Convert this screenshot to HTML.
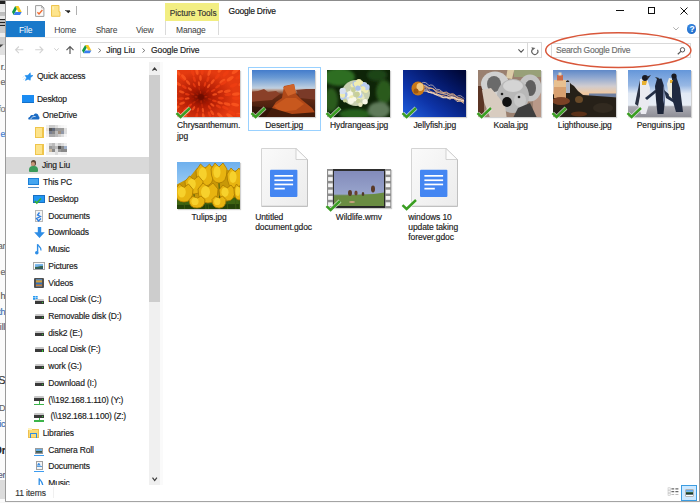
<!DOCTYPE html>
<html><head><meta charset="utf-8">
<style>
*{margin:0;padding:0;box-sizing:border-box}
html,body{width:700px;height:503px;overflow:hidden;background:#fff}
body{position:relative;font-family:"Liberation Sans",sans-serif;color:#1a1a1a}
.a{position:absolute}
.t{position:absolute;white-space:pre;font-size:8.5px;letter-spacing:-0.1px;line-height:12px;-webkit-text-stroke:0.15px currentColor}
svg{position:absolute;overflow:visible}
</style></head><body>
<div class="a" style="left:0;top:0;width:5px;height:503px;overflow:hidden;background:#fbfbfb"><div class="a" style="left:0;top:0;width:5px;height:60px;background:linear-gradient(180deg,#ddd 0,#222 1px,#222 4.5px,#e6e6e6 4.5px,#eee 12px,#bbb 12px,#c4c4c4 16px,#e8e8e8 16px,#e8e8e8 19px,#222 19px,#222 20.5px,#bbb 20.5px,#bbb 22px,#222 22px,#222 23.5px,#bbb 23.5px,#bbb 25px,#222 25px,#222 26.5px,#c8c8c8 26.5px,#ccc 33px,#eee 33px,#eee 37px,#ccc 37px,#ccc 45px,#e0e0e0 45px,#e0e0e0 55px,#fbfbfb 55px)"></div><svg style="left:0;top:44px" width="4" height="4"><path d="M0 0.5L3.5 0.5L0 3.5Z" fill="#444"/></svg><div class="a" style="left:0;top:480px;width:5px;height:19px;background:#dcdcdc"></div><div class="t" style="right:-0.5px;left:auto;top:61px;color:#555;font-size:9px;">r.</div><div class="t" style="right:-0.5px;left:auto;top:76px;color:#666;font-size:9px;">e</div><div class="t" style="right:-0.5px;left:auto;top:103px;color:#777;font-size:9px;">fo</div><div class="t" style="right:-0.5px;left:auto;top:128px;color:#3a7ad0;font-size:9px;">e</div><div class="t" style="right:-0.5px;left:auto;top:240px;color:#666;font-size:9px;">ar</div><div class="t" style="right:-0.5px;left:auto;top:265.5px;color:#666;font-size:9px;">e</div><div class="t" style="right:-0.5px;left:auto;top:290px;color:#555;font-size:9px;">h</div><div class="t" style="right:-0.5px;left:auto;top:306px;color:#3a6ab0;font-size:9px;">th</div><div class="t" style="right:-0.5px;left:auto;top:321.4px;color:#556;font-size:9px;">ill</div><div class="t" style="right:-0.5px;left:auto;top:373.6px;color:#333;font-size:9px;font-size:11px">S</div><div class="t" style="right:-0.5px;left:auto;top:401.6px;color:#666;font-size:9px;">D</div><div class="t" style="right:-0.5px;left:auto;top:418px;color:#3a6ab0;font-size:9px;">ic</div><div class="t" style="right:-0.5px;left:auto;top:444.5px;color:#222;font-size:9px;font-weight:bold;font-size:10px">Or</div><div class="t" style="right:-0.5px;left:auto;top:469px;color:#557;font-size:9px;">er</div></div>
<div class="a" style="left:0;top:502px;width:700px;height:1px;background:#f6f6f6"></div>
<div class="a" style="left:5px;top:0;width:695px;height:1px;background:#8c8c8c"></div>
<div class="a" style="left:5px;top:0;width:1px;height:502px;background:#9a9a9a"></div>
<div class="a" style="left:699px;top:0;width:1px;height:502px;background:#9a9a9a"></div>
<div class="a" style="left:5px;top:501px;width:695px;height:1px;background:#a4a4a4"></div>
<div class="a" style="left:165px;top:3px;width:54px;height:18px;background:#f2ee82"></div>
<div class="t" style="left:169.8px;top:6.55px;color:#333;font-size:8.3px;letter-spacing:-0.05px">Picture Tools</div>

<div class="t" style="left:228.5px;top:5.15px;color:#111;letter-spacing:-0.2px">Google Drive</div>

<div class="a" style="left:616px;top:10px;width:8px;height:1px;background:#111"></div>
<div class="a" style="left:648px;top:7px;width:7px;height:7px;border:1px solid #111"></div>
<svg style="left:680px;top:7px" width="8" height="8"><path d="M0.5 0.5L7.5 7.5M7.5 0.5L0.5 7.5" stroke="#111" stroke-width="1"/></svg>
<div class="a" style="left:6px;top:21px;width:39px;height:16px;background:#1979ca"></div>
<div class="t" style="left:19px;top:23.95px;color:#fff;-webkit-text-stroke:0">File</div>

<div class="t" style="left:54.3px;top:23.95px;color:#3c3c3c;letter-spacing:-0.25px;-webkit-text-stroke:0">Home</div>

<div class="t" style="left:95.7px;top:23.95px;color:#3c3c3c;letter-spacing:-0.25px;-webkit-text-stroke:0">Share</div>

<div class="t" style="left:136px;top:23.95px;color:#3c3c3c;letter-spacing:-0.25px;-webkit-text-stroke:0">View</div>

<div class="a" style="left:165px;top:21px;width:1px;height:14px;background:#dadada"></div>
<div class="a" style="left:218px;top:21px;width:1px;height:14px;background:#dadada"></div>
<div class="t" style="left:176px;top:23.95px;color:#3c3c3c;letter-spacing:-0.2px;-webkit-text-stroke:0">Manage</div>

<div class="a" style="left:6px;top:37px;width:693px;height:1px;background:#ececec"></div>
<div class="a" style="left:80px;top:42px;width:462px;height:16px;border:1px solid #d9d9d9"></div>
<div class="a" style="left:527px;top:42px;width:1px;height:16px;background:#d9d9d9"></div>
<div class="a" style="left:551px;top:42.5px;width:140px;height:15px;border:1px solid #d9d9d9"></div>
<div class="t" style="left:106.3px;top:43.65px;color:#1a1a1a;">Jing Liu</div>

<div class="t" style="left:151px;top:43.65px;color:#1a1a1a;">Google Drive</div>

<div class="t" style="left:556px;top:43.95px;color:#6d6d6d;letter-spacing:-0.25px">Search Google Drive</div>

<div class="a" style="left:149px;top:62px;width:11px;height:422.5px;background:#f0f0f0"></div>
<div class="a" style="left:160px;top:62px;width:3px;height:422.5px;background:#fafafa"></div>
<svg style="left:151.8px;top:66.8px" width="5.2" height="4.2"><path d="M0.5 3.6L2.6 1L4.7 3.6" stroke="#3a3a3a" stroke-width="1.2" fill="none"/></svg>
<svg style="left:151.8px;top:476.8px" width="5.4" height="4.4"><path d="M0.5 0.6L2.7 3.5L4.9 0.6" stroke="#3a3a3a" stroke-width="1.2" fill="none"/></svg>
<div class="a" style="left:149px;top:75px;width:11px;height:227px;background:#cdcdcd"></div>
<div class="a" style="left:6px;top:157px;width:143px;height:17px;background:#d9d9d9"></div>
<div class="a" style="left:0;top:0;width:149px;height:484.7px;overflow:hidden"><div class="t" style="left:36.9px;top:70.25px;color:#1a1a1a;letter-spacing:-0.17px">Quick access</div>
<div class="t" style="left:36.9px;top:92.59px;color:#1a1a1a;letter-spacing:-0.17px">Desktop</div>
<div class="t" style="left:42.6px;top:109.31px;color:#1a1a1a;letter-spacing:-0.17px">OneDrive</div>
<div class="t" style="left:42px;top:159.47px;color:#1a1a1a;letter-spacing:-0.17px">Jing Liu</div>
<div class="t" style="left:42.9px;top:176.19px;color:#1a1a1a;letter-spacing:-0.17px">This PC</div>
<div class="t" style="left:48.3px;top:192.91px;color:#1a1a1a;letter-spacing:-0.17px">Desktop</div>
<div class="t" style="left:48.3px;top:209.63px;color:#1a1a1a;letter-spacing:-0.17px">Documents</div>
<div class="t" style="left:48.3px;top:226.35px;color:#1a1a1a;letter-spacing:-0.17px">Downloads</div>
<div class="t" style="left:48.3px;top:243.07px;color:#1a1a1a;letter-spacing:-0.17px">Music</div>
<div class="t" style="left:48.3px;top:259.79px;color:#1a1a1a;letter-spacing:-0.17px">Pictures</div>
<div class="t" style="left:48.3px;top:276.51px;color:#1a1a1a;letter-spacing:-0.17px">Videos</div>
<div class="t" style="left:48.3px;top:293.23px;color:#1a1a1a;letter-spacing:-0.17px">Local Disk (C:)</div>
<div class="t" style="left:48.3px;top:309.95px;color:#1a1a1a;letter-spacing:-0.2px">Removable disk (D:)</div>
<div class="t" style="left:48.3px;top:326.67px;color:#1a1a1a;letter-spacing:-0.17px">disk2 (E:)</div>
<div class="t" style="left:48.3px;top:343.39px;color:#1a1a1a;letter-spacing:-0.17px">Local Disk (F:)</div>
<div class="t" style="left:48.3px;top:360.11px;color:#1a1a1a;letter-spacing:-0.17px">work (G:)</div>
<div class="t" style="left:48.3px;top:376.83px;color:#1a1a1a;letter-spacing:-0.17px">Download (I:)</div>
<div class="t" style="left:48.3px;top:393.55px;color:#1a1a1a;letter-spacing:-0.22px">(\\192.168.1.110) (Y:)</div>
<div class="t" style="left:50.5px;top:410.27px;color:#1a1a1a;letter-spacing:-0.22px">(\\192.168.1.100) (Z:)</div>
<div class="t" style="left:42.8px;top:426.99px;color:#1a1a1a;letter-spacing:-0.17px">Libraries</div>
<div class="t" style="left:48.3px;top:443.71px;color:#1a1a1a;letter-spacing:-0.17px">Camera Roll</div>
<div class="t" style="left:48.3px;top:460.43px;color:#1a1a1a;letter-spacing:-0.17px">Documents</div>
<div class="t" style="left:48.3px;top:477.15px;color:#1a1a1a;letter-spacing:-0.17px">Music</div>
<svg style="left:20px;top:70px" width="15" height="12" viewBox="0 0 15 12"><path d="M10.20 2.80L10.46 5.35L13.00 5.50L10.46 7.64L10.20 10.20L8.10 9.16L5.40 10.40L6.52 7.70L5.10 5.50L8.01 5.35Z" fill="#2590ee" stroke="#2590ee" stroke-width="0.6" stroke-linejoin="round"/><path d="M3 10L5 8M2.5 7.5L4.5 6" stroke="#cfe6fa" stroke-width="0.8"/></svg><div class="a" style="left:22px;top:95px;width:11.5px;height:8px;background:#1b8cf2;border-bottom:1px solid #1470c8"></div><svg style="left:27.5px;top:111.5px" width="12" height="8" viewBox="0 0 12 8"><path d="M0.6 7.4C-0.2 6.6 0.4 5 1.8 5C2.3 3.2 4.2 2.6 5.3 3.4C6.4 0.4 10.6 0.8 10.6 4.3C11.8 4.6 11.8 7.4 10.6 7.4Z" fill="#1c6cc4"/><path d="M2.6 7.2C3.5 5.2 5.5 4 7.6 4.6" stroke="#fff" stroke-width="0.7" fill="none"/></svg><div class="a" style="left:35px;top:127px;width:8.5px;height:11px;background:#fde38a;border:1px solid #efc54c;border-right-width:2px"></div><div class="a" style="left:35px;top:143.5px;width:8.5px;height:11px;background:#fde38a;border:1px solid #efc54c;border-right-width:2px"></div><svg style="left:46.2px;top:125px;filter:blur(0.5px)" width="21" height="12"><rect x="0" y="0" width="3" height="3" fill="#eee"/><rect x="3" y="0" width="3" height="3" fill="#ccc"/><rect x="6" y="0" width="3" height="3" fill="#ccc"/><rect x="9" y="0" width="3" height="3" fill="#ddd"/><rect x="12" y="0" width="3" height="3" fill="#f0f0f0"/><rect x="15" y="0" width="3" height="3" fill="#f5f5f5"/><rect x="18" y="0" width="3" height="3" fill="#fafafa"/><rect x="0" y="3" width="3" height="3" fill="#e8e0d8"/><rect x="3" y="3" width="3" height="3" fill="#555"/><rect x="6" y="3" width="3" height="3" fill="#606878"/><rect x="9" y="3" width="3" height="3" fill="#999"/><rect x="12" y="3" width="3" height="3" fill="#999"/><rect x="15" y="3" width="3" height="3" fill="#9a9a9a"/><rect x="18" y="3" width="3" height="3" fill="#ddd"/><rect x="0" y="6" width="3" height="3" fill="#eee"/><rect x="3" y="6" width="3" height="3" fill="#7a8090"/><rect x="6" y="6" width="3" height="3" fill="#888"/><rect x="9" y="6" width="3" height="3" fill="#bbb"/><rect x="12" y="6" width="3" height="3" fill="#a09080"/><rect x="15" y="6" width="3" height="3" fill="#9098a8"/><rect x="18" y="6" width="3" height="3" fill="#ddd"/><rect x="0" y="9" width="3" height="3" fill="#f5f0f0"/><rect x="3" y="9" width="3" height="3" fill="#aaa"/><rect x="6" y="9" width="3" height="3" fill="#aaa"/><rect x="9" y="9" width="3" height="3" fill="#bbb"/><rect x="12" y="9" width="3" height="3" fill="#ccc"/><rect x="15" y="9" width="3" height="3" fill="#ddd"/><rect x="18" y="9" width="3" height="3" fill="#f5f5f5"/></svg><svg style="left:46.2px;top:143.3px;filter:blur(0.5px)" width="21" height="12"><rect x="0" y="0" width="3" height="3" fill="#f5f5f5"/><rect x="3" y="0" width="3" height="3" fill="#ccc"/><rect x="6" y="0" width="3" height="3" fill="#bbb"/><rect x="9" y="0" width="3" height="3" fill="#e5e5e5"/><rect x="12" y="0" width="3" height="3" fill="#ccc"/><rect x="15" y="0" width="3" height="3" fill="#ddd"/><rect x="18" y="0" width="3" height="3" fill="#eee"/><rect x="0" y="3" width="3" height="3" fill="#f5f5f5"/><rect x="3" y="3" width="3" height="3" fill="#999"/><rect x="6" y="3" width="3" height="3" fill="#aaa"/><rect x="9" y="3" width="3" height="3" fill="#bbb"/><rect x="12" y="3" width="3" height="3" fill="#555"/><rect x="15" y="3" width="3" height="3" fill="#888"/><rect x="18" y="3" width="3" height="3" fill="#a0b0c8"/><rect x="0" y="6" width="3" height="3" fill="#f5f5f5"/><rect x="3" y="6" width="3" height="3" fill="#c8b8a0"/><rect x="6" y="6" width="3" height="3" fill="#888"/><rect x="9" y="6" width="3" height="3" fill="#ddd"/><rect x="12" y="6" width="3" height="3" fill="#999"/><rect x="15" y="6" width="3" height="3" fill="#888"/><rect x="18" y="6" width="3" height="3" fill="#888"/><rect x="0" y="9" width="3" height="3" fill="#f0f0f0"/><rect x="3" y="9" width="3" height="3" fill="#eee"/><rect x="6" y="9" width="3" height="3" fill="#eee"/><rect x="9" y="9" width="3" height="3" fill="#ddd"/><rect x="12" y="9" width="3" height="3" fill="#f0f0f0"/><rect x="15" y="9" width="3" height="3" fill="#eee"/><rect x="18" y="9" width="3" height="3" fill="#eee"/></svg><div class="a" style="left:29px;top:165.5px;width:8.5px;height:6px;background:#3a9a5a;border-radius:4px 4px 1px 1px"></div><div class="a" style="left:30.5px;top:159.8px;width:5.5px;height:6.3px;background:#5a4535;border-radius:3px"></div><div class="a" style="left:31.3px;top:161.8px;width:4px;height:4px;background:#c8977a;border-radius:2px"></div><div class="a" style="left:28px;top:177.5px;width:11px;height:7.5px;background:#46a6f0;border:1px solid #1a7fd8"></div><div class="a" style="left:28px;top:186.5px;width:11px;height:1px;background:#5a8fc8"></div><div class="a" style="left:33.3px;top:195px;width:11.5px;height:8px;background:#2196f3;border:1px solid #1a6fc0"></div><svg style="left:34px;top:197px" width="8" height="7"><path d="M0.8 4L2.8 6L7 1.5" stroke="#38b030" stroke-width="1.6" fill="none"/></svg><div class="a" style="left:34.5px;top:210px;width:8.5px;height:11.5px;background:#f4f4f4;border:1px solid #b8b8b8"></div><svg style="left:35px;top:211.5px" width="8" height="10"><path d="M4.5 0.5L2.5 3L5.5 4.5L1.5 6.5L4 9.5M6 6.5L3.5 9" stroke="#2a7de1" stroke-width="1.3" fill="none"/></svg><svg style="left:33.5px;top:227px" width="11" height="11" viewBox="0 0 11 11"><path d="M3.8 0H7.2V5.2H10.8L5.5 11L0.2 5.2H3.8Z" fill="#2d8de6"/></svg><svg style="left:34.5px;top:243.8px" width="7" height="11" viewBox="0 0 7 11"><path d="M2.6 0.2V7.8" stroke="#2d8de6" stroke-width="1.4"/><path d="M2.6 0.5C3.5 2.5 6.5 3 6 6.5" stroke="#2d8de6" stroke-width="1.2" fill="none"/><ellipse cx="1.8" cy="8.8" rx="1.8" ry="1.8" fill="#2d8de6"/></svg><div class="a" style="left:33px;top:262px;width:11.7px;height:8px;background:#fafafa;border:1px solid #a8a8a8"></div><div class="a" style="left:34.5px;top:263.5px;width:8.7px;height:5px;background:linear-gradient(170deg,#8ec8f5 0%,#6aa8e0 45%,#3d6a48 55%,#2a5070 100%)"></div><div class="a" style="left:34.2px;top:277.7px;width:9.7px;height:10.6px;background:#505050;border-radius:1px"></div><div class="a" style="left:35.7px;top:278.7px;width:6.7px;height:8.6px;background:linear-gradient(180deg,#3a80d0 0%,#e0a030 30%,#2a70c0 55%,#d08030 80%,#3a70b0 100%)"></div><svg style="left:33px;top:295.8px" width="5" height="4"><rect x="0" y="0" width="2" height="1.6" fill="#2a9af0"/><rect x="2.4" y="0" width="2.3" height="1.6" fill="#2a9af0"/><rect x="0" y="2" width="2" height="1.8" fill="#2a9af0"/><rect x="2.4" y="2" width="2.3" height="1.8" fill="#2a9af0"/></svg><div class="a" style="left:34.5px;top:298.5px;width:9.5px;height:2px;background:#c8c8c8;border-radius:1px 1px 0 0"></div><div class="a" style="left:34.5px;top:300.5px;width:9.5px;height:3px;background:#3a3a3a"></div><div class="a" style="left:42.0px;top:301.5px;width:1.2px;height:1.2px;background:#3c3"></div><div class="a" style="left:34.5px;top:313.8px;width:9.5px;height:2px;background:#c8c8c8;border-radius:1px 1px 0 0"></div><div class="a" style="left:34.5px;top:315.8px;width:9.5px;height:3px;background:#3a3a3a"></div><div class="a" style="left:42.0px;top:316.8px;width:1.2px;height:1.2px;background:#3c3"></div><div class="a" style="left:34.5px;top:330.6px;width:9.5px;height:2px;background:#c8c8c8;border-radius:1px 1px 0 0"></div><div class="a" style="left:34.5px;top:332.6px;width:9.5px;height:3px;background:#3a3a3a"></div><div class="a" style="left:42.0px;top:333.6px;width:1.2px;height:1.2px;background:#3c3"></div><div class="a" style="left:34.5px;top:347.40000000000003px;width:9.5px;height:2px;background:#c8c8c8;border-radius:1px 1px 0 0"></div><div class="a" style="left:34.5px;top:349.40000000000003px;width:9.5px;height:3px;background:#3a3a3a"></div><div class="a" style="left:42.0px;top:350.40000000000003px;width:1.2px;height:1.2px;background:#3c3"></div><div class="a" style="left:34.5px;top:364.1px;width:9.5px;height:2px;background:#c8c8c8;border-radius:1px 1px 0 0"></div><div class="a" style="left:34.5px;top:366.1px;width:9.5px;height:3px;background:#3a3a3a"></div><div class="a" style="left:42.0px;top:367.1px;width:1.2px;height:1.2px;background:#3c3"></div><div class="a" style="left:34.5px;top:380.90000000000003px;width:9.5px;height:2px;background:#c8c8c8;border-radius:1px 1px 0 0"></div><div class="a" style="left:34.5px;top:382.90000000000003px;width:9.5px;height:3px;background:#3a3a3a"></div><div class="a" style="left:42.0px;top:383.90000000000003px;width:1.2px;height:1.2px;background:#3c3"></div><div class="a" style="left:34.4px;top:396.2px;width:9.5px;height:2px;background:#c8c8c8;border-radius:1px 1px 0 0"></div><div class="a" style="left:34.4px;top:398.2px;width:9.5px;height:3px;background:#3a3a3a"></div><div class="a" style="left:41.9px;top:399.2px;width:1.2px;height:1.2px;background:#3c3"></div><div class="a" style="left:38.5px;top:401.2px;width:1.3px;height:2.5px;background:#3cb44a"></div><div class="a" style="left:34.4px;top:403.5px;width:9.5px;height:1.3px;background:#3cb44a"></div><div class="a" style="left:34.4px;top:413.0px;width:9.5px;height:2px;background:#c8c8c8;border-radius:1px 1px 0 0"></div><div class="a" style="left:34.4px;top:415.0px;width:9.5px;height:3px;background:#3a3a3a"></div><div class="a" style="left:41.9px;top:416.0px;width:1.2px;height:1.2px;background:#3c3"></div><div class="a" style="left:38.5px;top:418.0px;width:1.3px;height:2.5px;background:#3cb44a"></div><div class="a" style="left:34.4px;top:420.3px;width:9.5px;height:1.3px;background:#3cb44a"></div><div class="a" style="left:27.8px;top:428.6px;width:11px;height:9px;background:#fbdc78;border:1px solid #eec050"></div><div class="a" style="left:27.8px;top:428px;width:4px;height:1.5px;background:#fff3c0"></div><div class="a" style="left:30.2px;top:432.8px;width:6.7px;height:5.2px;border:1.6px solid #2d8de6;border-bottom:none;border-radius:1px 1px 0 0"></div><div class="a" style="left:34.8px;top:448px;width:8.2px;height:6px;background:#f4f4f4;border:1px solid #9a9a9a"></div><div class="a" style="left:35.8px;top:449.3px;width:6.2px;height:3.5px;background:linear-gradient(180deg,#6ab0e8 0 40%,#3a5a40 60%,#5a7090)"></div><div class="a" style="left:33.8px;top:454.5px;width:10.1px;height:1.2px;background:#3d9cf0"></div><div class="a" style="left:35.5px;top:460.9px;width:7px;height:9.5px;background:#f4f4f4;border:1px solid #a0a0a0"></div><div class="a" style="left:36.8px;top:462.5px;width:4px;height:3px;background:#3d8de0;clip-path:polygon(50% 0,100% 100%,0 100%)"></div><div class="a" style="left:36.5px;top:466px;width:5px;height:1px;background:#5aa0e0"></div><div class="a" style="left:33.8px;top:471.2px;width:10.1px;height:1.2px;background:#3d9cf0"></div><svg style="left:38.4px;top:477.8px" width="6" height="8"><path d="M1.2 0.3V7.5M1.2 0.8C2.5 2.5 4.5 3.5 4.8 7.5" stroke="#2d8de6" stroke-width="1.3" fill="none"/></svg></div>
<div class="a" style="left:177px;top:69.5px;width:63px;height:47px;overflow:hidden;box-shadow:1px 1px 1px rgba(0,0,0,0.18)"><svg style="left:-3px;top:-3px;filter:blur(0.55px)" width="69" height="53" viewBox="-3 -3 69 53"><rect x="-3" y="-3" width="69" height="53" fill="#d83010"/>
<radialGradient id="g1" cx="0.38" cy="0.57" r="0.5"><stop offset="0" stop-color="#6a0c00"/><stop offset="0.35" stop-color="#b01c04"/><stop offset="1" stop-color="#e43a10"/></radialGradient>
<rect x="-3" y="-3" width="69" height="53" fill="url(#g1)"/>
<g opacity="0.75"><ellipse cx="29.0" cy="26.8" rx="1.5" ry="0.7" transform="rotate(-3 29.0 26.8)" fill="#c82a08"/><ellipse cx="27.5" cy="30.4" rx="1.5" ry="0.7" transform="rotate(46 27.5 30.4)" fill="#a81800"/><ellipse cx="24.1" cy="31.7" rx="1.5" ry="0.7" transform="rotate(89 24.1 31.7)" fill="#c82a08"/><ellipse cx="20.4" cy="30.3" rx="1.5" ry="0.7" transform="rotate(136 20.4 30.3)" fill="#a81800"/><ellipse cx="19.0" cy="26.9" rx="1.5" ry="0.7" transform="rotate(181 19.0 26.9)" fill="#c82a08"/><ellipse cx="20.2" cy="23.9" rx="1.5" ry="0.7" transform="rotate(220 20.2 23.9)" fill="#a81800"/><ellipse cx="23.5" cy="22.3" rx="1.5" ry="0.7" transform="rotate(264 23.5 22.3)" fill="#c82a08"/><ellipse cx="27.8" cy="23.9" rx="1.5" ry="0.7" transform="rotate(319 27.8 23.9)" fill="#a81800"/><ellipse cx="32.7" cy="29.1" rx="2.0" ry="0.9" transform="rotate(14 32.7 29.1)" fill="#c82a08"/><ellipse cx="30.5" cy="33.0" rx="2.0" ry="0.9" transform="rotate(44 30.5 33.0)" fill="#a81800"/><ellipse cx="25.1" cy="35.5" rx="2.0" ry="0.9" transform="rotate(83 25.1 35.5)" fill="#c82a08"/><ellipse cx="21.4" cy="35.2" rx="2.0" ry="0.9" transform="rotate(107 21.4 35.2)" fill="#a81800"/><ellipse cx="17.0" cy="32.4" rx="2.0" ry="0.9" transform="rotate(141 17.0 32.4)" fill="#c82a08"/><ellipse cx="15.2" cy="28.9" rx="2.0" ry="0.9" transform="rotate(167 15.2 28.9)" fill="#a81800"/><ellipse cx="15.5" cy="24.2" rx="2.0" ry="0.9" transform="rotate(199 15.5 24.2)" fill="#c82a08"/><ellipse cx="17.4" cy="21.1" rx="2.0" ry="0.9" transform="rotate(223 17.4 21.1)" fill="#a81800"/><ellipse cx="22.2" cy="18.6" rx="2.0" ry="0.9" transform="rotate(259 22.2 18.6)" fill="#c82a08"/><ellipse cx="27.3" cy="19.0" rx="2.0" ry="0.9" transform="rotate(291 27.3 19.0)" fill="#a81800"/><ellipse cx="30.6" cy="21.2" rx="2.0" ry="0.9" transform="rotate(317 30.6 21.2)" fill="#c82a08"/><ellipse cx="32.9" cy="25.5" rx="2.0" ry="0.9" transform="rotate(350 32.9 25.5)" fill="#a81800"/><ellipse cx="35.3" cy="34.9" rx="2.5" ry="1.1" transform="rotate(36 35.3 34.9)" fill="#ff5a22"/><ellipse cx="32.6" cy="37.5" rx="2.5" ry="1.1" transform="rotate(52 32.6 37.5)" fill="#f03e12"/><ellipse cx="25.9" cy="40.2" rx="2.5" ry="1.1" transform="rotate(82 25.9 40.2)" fill="#ff5a22"/><ellipse cx="20.9" cy="40.0" rx="2.5" ry="1.1" transform="rotate(103 20.9 40.0)" fill="#f03e12"/><ellipse cx="16.6" cy="38.3" rx="2.5" ry="1.1" transform="rotate(122 16.6 38.3)" fill="#ff5a22"/><ellipse cx="13.0" cy="35.3" rx="2.5" ry="1.1" transform="rotate(142 13.0 35.3)" fill="#f03e12"/><ellipse cx="10.1" cy="28.5" rx="2.5" ry="1.1" transform="rotate(174 10.1 28.5)" fill="#ff5a22"/><ellipse cx="10.3" cy="24.3" rx="2.5" ry="1.1" transform="rotate(192 10.3 24.3)" fill="#f03e12"/><ellipse cx="12.8" cy="19.0" rx="2.5" ry="1.1" transform="rotate(217 12.8 19.0)" fill="#ff5a22"/><ellipse cx="17.3" cy="15.3" rx="2.5" ry="1.1" transform="rotate(241 17.3 15.3)" fill="#f03e12"/><ellipse cx="22.0" cy="13.8" rx="2.5" ry="1.1" transform="rotate(262 22.0 13.8)" fill="#ff5a22"/><ellipse cx="28.0" cy="14.3" rx="2.5" ry="1.1" transform="rotate(287 28.0 14.3)" fill="#f03e12"/><ellipse cx="31.7" cy="15.9" rx="2.5" ry="1.1" transform="rotate(303 31.7 15.9)" fill="#ff5a22"/><ellipse cx="36.2" cy="20.4" rx="2.5" ry="1.1" transform="rotate(330 36.2 20.4)" fill="#f03e12"/><ellipse cx="37.7" cy="24.4" rx="2.5" ry="1.1" transform="rotate(349 37.7 24.4)" fill="#ff5a22"/><ellipse cx="37.4" cy="30.9" rx="2.5" ry="1.1" transform="rotate(377 37.4 30.9)" fill="#f03e12"/><ellipse cx="35.2" cy="42.7" rx="3.0" ry="1.3" transform="rotate(56 35.2 42.7)" fill="#ff5a22"/><ellipse cx="32.5" cy="44.2" rx="3.0" ry="1.3" transform="rotate(65 32.5 44.2)" fill="#f03e12"/><ellipse cx="26.3" cy="45.9" rx="3.0" ry="1.3" transform="rotate(83 26.3 45.9)" fill="#ff5a22"/><ellipse cx="19.7" cy="45.6" rx="3.0" ry="1.3" transform="rotate(102 19.7 45.6)" fill="#f03e12"/><ellipse cx="11.4" cy="41.8" rx="3.0" ry="1.3" transform="rotate(129 11.4 41.8)" fill="#ff5a22"/><ellipse cx="8.5" cy="39.0" rx="3.0" ry="1.3" transform="rotate(141 8.5 39.0)" fill="#f03e12"/><ellipse cx="5.1" cy="33.2" rx="3.0" ry="1.3" transform="rotate(161 5.1 33.2)" fill="#ff5a22"/><ellipse cx="4.1" cy="28.6" rx="3.0" ry="1.3" transform="rotate(175 4.1 28.6)" fill="#f03e12"/><ellipse cx="4.7" cy="21.9" rx="3.0" ry="1.3" transform="rotate(196 4.7 21.9)" fill="#ff5a22"/><ellipse cx="7.1" cy="16.9" rx="3.0" ry="1.3" transform="rotate(212 7.1 16.9)" fill="#f03e12"/><ellipse cx="11.1" cy="12.5" rx="3.0" ry="1.3" transform="rotate(230 11.1 12.5)" fill="#ff5a22"/><ellipse cx="17.3" cy="9.1" rx="3.0" ry="1.3" transform="rotate(251 17.3 9.1)" fill="#f03e12"/><ellipse cx="23.5" cy="8.0" rx="3.0" ry="1.3" transform="rotate(269 23.5 8.0)" fill="#ff5a22"/><ellipse cx="30.9" cy="9.2" rx="3.0" ry="1.3" transform="rotate(290 30.9 9.2)" fill="#f03e12"/><ellipse cx="35.7" cy="11.6" rx="3.0" ry="1.3" transform="rotate(306 35.7 11.6)" fill="#ff5a22"/><ellipse cx="40.7" cy="16.5" rx="3.0" ry="1.3" transform="rotate(326 40.7 16.5)" fill="#f03e12"/><ellipse cx="43.2" cy="21.7" rx="3.0" ry="1.3" transform="rotate(344 43.2 21.7)" fill="#ff5a22"/><ellipse cx="44.0" cy="28.1" rx="3.0" ry="1.3" transform="rotate(363 44.0 28.1)" fill="#f03e12"/><ellipse cx="43.1" cy="32.7" rx="3.0" ry="1.3" transform="rotate(378 43.1 32.7)" fill="#ff5a22"/><ellipse cx="41.4" cy="36.4" rx="3.0" ry="1.3" transform="rotate(390 41.4 36.4)" fill="#f03e12"/><ellipse cx="31.9" cy="51.5" rx="3.5" ry="1.5" transform="rotate(73 31.9 51.5)" fill="#ff5a22"/><ellipse cx="25.0" cy="52.6" rx="3.5" ry="1.5" transform="rotate(88 25.0 52.6)" fill="#f03e12"/><ellipse cx="18.8" cy="52.2" rx="3.5" ry="1.5" transform="rotate(101 18.8 52.2)" fill="#ff5a22"/><ellipse cx="14.3" cy="50.9" rx="3.5" ry="1.5" transform="rotate(111 14.3 50.9)" fill="#f03e12"/><ellipse cx="7.9" cy="47.6" rx="3.5" ry="1.5" transform="rotate(127 7.9 47.6)" fill="#ff5a22"/><ellipse cx="5.0" cy="45.2" rx="3.5" ry="1.5" transform="rotate(135 5.0 45.2)" fill="#f03e12"/><ellipse cx="-0.6" cy="37.6" rx="3.5" ry="1.5" transform="rotate(156 -0.6 37.6)" fill="#ff5a22"/><ellipse cx="-2.3" cy="33.0" rx="3.5" ry="1.5" transform="rotate(167 -2.3 33.0)" fill="#f03e12"/><ellipse cx="-3.0" cy="28.3" rx="3.5" ry="1.5" transform="rotate(177 -3.0 28.3)" fill="#ff5a22"/><ellipse cx="-2.7" cy="23.3" rx="3.5" ry="1.5" transform="rotate(188 -2.7 23.3)" fill="#f03e12"/><ellipse cx="0.9" cy="13.7" rx="3.5" ry="1.5" transform="rotate(211 0.9 13.7)" fill="#ff5a22"/><ellipse cx="5.5" cy="8.3" rx="3.5" ry="1.5" transform="rotate(227 5.5 8.3)" fill="#f03e12"/><ellipse cx="6.7" cy="7.3" rx="3.5" ry="1.5" transform="rotate(230 6.7 7.3)" fill="#ff5a22"/><ellipse cx="15.7" cy="2.6" rx="3.5" ry="1.5" transform="rotate(252 15.7 2.6)" fill="#f03e12"/><ellipse cx="20.0" cy="1.6" rx="3.5" ry="1.5" transform="rotate(262 20.0 1.6)" fill="#ff5a22"/><ellipse cx="25.2" cy="1.4" rx="3.5" ry="1.5" transform="rotate(272 25.2 1.4)" fill="#f03e12"/><ellipse cx="32.3" cy="2.6" rx="3.5" ry="1.5" transform="rotate(288 32.3 2.6)" fill="#ff5a22"/><ellipse cx="40.3" cy="6.6" rx="3.5" ry="1.5" transform="rotate(307 40.3 6.6)" fill="#f03e12"/><ellipse cx="45.4" cy="11.3" rx="3.5" ry="1.5" transform="rotate(322 45.4 11.3)" fill="#ff5a22"/><ellipse cx="46.5" cy="12.9" rx="3.5" ry="1.5" transform="rotate(327 46.5 12.9)" fill="#f03e12"/><ellipse cx="50.3" cy="21.2" rx="3.5" ry="1.5" transform="rotate(347 50.3 21.2)" fill="#ff5a22"/><ellipse cx="50.9" cy="24.5" rx="3.5" ry="1.5" transform="rotate(354 50.9 24.5)" fill="#f03e12"/><ellipse cx="50.0" cy="34.0" rx="3.5" ry="1.5" transform="rotate(376 50.0 34.0)" fill="#ff5a22"/><ellipse cx="48.4" cy="38.0" rx="3.5" ry="1.5" transform="rotate(385 48.4 38.0)" fill="#f03e12"/><ellipse cx="42.9" cy="45.3" rx="3.5" ry="1.5" transform="rotate(405 42.9 45.3)" fill="#ff5a22"/><ellipse cx="37.3" cy="49.3" rx="3.5" ry="1.5" transform="rotate(420 37.3 49.3)" fill="#f03e12"/><ellipse cx="-0.8" cy="50.5" rx="4.0" ry="1.7" transform="rotate(135 -0.8 50.5)" fill="#ff5a22"/><ellipse cx="-3.0" cy="48.1" rx="4.0" ry="1.7" transform="rotate(141 -3.0 48.1)" fill="#f03e12"/><ellipse cx="-1.9" cy="4.7" rx="4.0" ry="1.7" transform="rotate(222 -1.9 4.7)" fill="#f03e12"/><ellipse cx="0.5" cy="2.4" rx="4.0" ry="1.7" transform="rotate(228 0.5 2.4)" fill="#ff5a22"/><ellipse cx="10.4" cy="-3.7" rx="4.0" ry="1.7" transform="rotate(247 10.4 -3.7)" fill="#f03e12"/><ellipse cx="17.0" cy="-5.6" rx="4.0" ry="1.7" transform="rotate(258 17.0 -5.6)" fill="#ff5a22"/><ellipse cx="28.6" cy="-6.0" rx="4.0" ry="1.7" transform="rotate(277 28.6 -6.0)" fill="#ff5a22"/><ellipse cx="36.1" cy="-4.2" rx="4.0" ry="1.7" transform="rotate(290 36.1 -4.2)" fill="#f03e12"/><ellipse cx="43.4" cy="-0.7" rx="4.0" ry="1.7" transform="rotate(304 43.4 -0.7)" fill="#ff5a22"/><ellipse cx="48.8" cy="3.5" rx="4.0" ry="1.7" transform="rotate(315 48.8 3.5)" fill="#f03e12"/><ellipse cx="53.2" cy="8.7" rx="4.0" ry="1.7" transform="rotate(327 53.2 8.7)" fill="#ff5a22"/><ellipse cx="56.7" cy="15.3" rx="4.0" ry="1.7" transform="rotate(339 56.7 15.3)" fill="#f03e12"/><ellipse cx="58.9" cy="24.1" rx="4.0" ry="1.7" transform="rotate(355 58.9 24.1)" fill="#ff5a22"/><ellipse cx="59.0" cy="28.2" rx="4.0" ry="1.7" transform="rotate(362 59.0 28.2)" fill="#f03e12"/><ellipse cx="58.1" cy="34.6" rx="4.0" ry="1.7" transform="rotate(373 58.1 34.6)" fill="#ff5a22"/><ellipse cx="54.8" cy="42.8" rx="4.0" ry="1.7" transform="rotate(388 54.8 42.8)" fill="#f03e12"/><ellipse cx="52.7" cy="46.0" rx="4.0" ry="1.7" transform="rotate(395 52.7 46.0)" fill="#ff5a22"/><ellipse cx="47.6" cy="51.6" rx="4.0" ry="1.7" transform="rotate(408 47.6 51.6)" fill="#f03e12"/><ellipse cx="52.9" cy="-4.5" rx="4.5" ry="1.9" transform="rotate(311 52.9 -4.5)" fill="#f03e12"/><ellipse cx="58.5" cy="1.0" rx="4.5" ry="1.9" transform="rotate(322 58.5 1.0)" fill="#ff5a22"/><ellipse cx="62.5" cy="6.7" rx="4.5" ry="1.9" transform="rotate(331 62.5 6.7)" fill="#f03e12"/><ellipse cx="65.8" cy="13.8" rx="4.5" ry="1.9" transform="rotate(342 65.8 13.8)" fill="#ff5a22"/><ellipse cx="67.8" cy="22.8" rx="4.5" ry="1.9" transform="rotate(354 67.8 22.8)" fill="#f03e12"/><ellipse cx="68.0" cy="27.6" rx="4.5" ry="1.9" transform="rotate(361 68.0 27.6)" fill="#ff5a22"/><ellipse cx="67.1" cy="35.5" rx="4.5" ry="1.9" transform="rotate(372 67.1 35.5)" fill="#f03e12"/><ellipse cx="63.5" cy="45.5" rx="4.5" ry="1.9" transform="rotate(386 63.5 45.5)" fill="#ff5a22"/><ellipse cx="63.0" cy="46.4" rx="4.5" ry="1.9" transform="rotate(388 63.0 46.4)" fill="#f03e12"/><ellipse cx="65.7" cy="-4.1" rx="4.5" ry="2.0" transform="rotate(322 65.7 -4.1)" fill="#ff5a22"/></g>
<circle cx="24" cy="27" r="3" fill="#6a0c00" opacity="0.7"/>
</svg></div><div class="a" style="left:252.3px;top:69.5px;width:63px;height:47px;overflow:hidden;box-shadow:1px 1px 1px rgba(0,0,0,0.18)"><svg style="left:-3px;top:-3px;filter:blur(0.7px)" width="69" height="53" viewBox="-3 -3 69 53">
<linearGradient id="g2" x1="0" y1="0" x2="0" y2="1"><stop offset="0" stop-color="#3470c8"/><stop offset="0.2" stop-color="#6a9ad4"/><stop offset="0.4" stop-color="#c0d0e0"/><stop offset="0.44" stop-color="#b89888"/><stop offset="0.52" stop-color="#6a2c14"/><stop offset="1" stop-color="#2e140a"/></linearGradient>
<rect x="-3" y="-3" width="69" height="53" fill="url(#g2)"/>
<path d="M-3 22L6 21L12 19L16 22L24 21L28 24L20 30L-3 32Z" fill="#8a4028"/>
<path d="M44 20L54 19L66 19L66 30L48 28Z" fill="#7a3a28"/>
<path d="M14 47L24 32L30 28L32 16L42 14L44 24L50 30L60 38L66 47Z" fill="#b04818"/>
<path d="M31 17L42 14L44 23L36 26Z" fill="#d0642a"/>
<path d="M22 36L34 28L44 28L52 34L44 40L28 42Z" fill="#c8581e"/>
<path d="M-3 36L20 38L40 44L66 42L66 50L-3 50Z" fill="#301408" opacity="0.85"/>
</svg></div><div class="a" style="left:327.3px;top:69.5px;width:63px;height:47px;overflow:hidden;box-shadow:1px 1px 1px rgba(0,0,0,0.18)"><svg style="left:-3px;top:-3px;filter:blur(0.55px)" width="69" height="53" viewBox="-3 -3 69 53"><rect x="-3" y="-3" width="69" height="53" fill="#0e2408"/>
<filter id="hb" x="-20%" y="-20%" width="140%" height="140%"><feGaussianBlur stdDeviation="1.8"/></filter><g filter="url(#hb)"><ellipse cx="12" cy="7" rx="16" ry="9" fill="#2e6e24"/>
<ellipse cx="50" cy="5" rx="10" ry="6" fill="#1e4416"/>
<ellipse cx="57" cy="22" rx="8" ry="12" fill="#2a5a1e"/>
<ellipse cx="4" cy="30" rx="7" ry="12" fill="#2a5c1e"/>
<ellipse cx="28" cy="44" rx="16" ry="5" fill="#26601e"/>
<ellipse cx="52" cy="40" rx="11" ry="8" fill="#5e7a5a"/>
</g><ellipse cx="29" cy="23" rx="14" ry="13" fill="#c8d0b0"/>
<circle cx="25.5" cy="15.5" r="2.0" fill="#f0ecb0"/><circle cx="32.0" cy="28.7" r="1.8" fill="#f0ecb0"/><circle cx="31.9" cy="18.0" r="1.8" fill="#b8ccf0"/><circle cx="21.6" cy="26.9" r="2.2" fill="#f8f8e8"/><circle cx="38.1" cy="31.7" r="2.7" fill="#f8f8e8"/><circle cx="28.4" cy="14.0" r="2.9" fill="#a8c0ec"/><circle cx="37.8" cy="14.6" r="2.4" fill="#d8e0f0"/><circle cx="21.4" cy="28.7" r="1.9" fill="#d8e0f0"/><circle cx="34.8" cy="25.5" r="2.0" fill="#f0ecb0"/><circle cx="25.4" cy="20.5" r="2.0" fill="#f8f8e8"/><circle cx="35.8" cy="27.8" r="1.9" fill="#e8e8c0"/><circle cx="31.2" cy="30.9" r="2.2" fill="#c8d098"/><circle cx="24.1" cy="29.6" r="2.0" fill="#e8e8c0"/><circle cx="15.2" cy="24.0" r="2.5" fill="#d8e0f0"/><circle cx="32.8" cy="25.2" r="2.8" fill="#b8ccf0"/><circle cx="17.5" cy="24.5" r="1.8" fill="#f8f8e8"/><circle cx="38.7" cy="20.1" r="2.8" fill="#f0ecb0"/><circle cx="39.5" cy="17.1" r="3.2" fill="#b8ccf0"/><circle cx="36.6" cy="14.6" r="2.5" fill="#b8ccf0"/><circle cx="36.0" cy="18.7" r="2.5" fill="#f0ecb0"/><circle cx="30.5" cy="15.5" r="2.7" fill="#f0ecb0"/><circle cx="31.9" cy="11.8" r="2.9" fill="#f0ecb0"/><circle cx="34.0" cy="12.6" r="2.1" fill="#f0ecb0"/><circle cx="17.0" cy="23.5" r="2.9" fill="#e8e8c0"/><circle cx="22.9" cy="24.0" r="3.1" fill="#f8f8e8"/><circle cx="16.2" cy="27.2" r="3.1" fill="#b8ccf0"/><circle cx="24.7" cy="27.7" r="2.5" fill="#f0ecb0"/><circle cx="23.9" cy="30.9" r="3.0" fill="#f8f8e8"/><circle cx="17.8" cy="24.4" r="2.7" fill="#a8c0ec"/><circle cx="31.5" cy="19.0" r="2.9" fill="#d8e0f0"/><circle cx="29.0" cy="13.8" r="2.4" fill="#f0ecb0"/><circle cx="26.3" cy="20.0" r="2.4" fill="#c8d098"/><circle cx="17.9" cy="30.5" r="2.0" fill="#c8d098"/><circle cx="31.3" cy="22.9" r="3.1" fill="#f8f8e8"/><circle cx="30.9" cy="18.2" r="2.6" fill="#a8c0ec"/><circle cx="15.6" cy="25.1" r="2.6" fill="#f0ecb0"/><circle cx="30.1" cy="24.2" r="2.7" fill="#c8d098"/><circle cx="15.7" cy="20.9" r="3.2" fill="#d8e0f0"/><circle cx="33.4" cy="34.7" r="2.2" fill="#e8e8c0"/><circle cx="27.2" cy="29.3" r="2.3" fill="#f8f8e8"/>
</svg></div><div class="a" style="left:402.7px;top:69.5px;width:63px;height:47px;overflow:hidden;box-shadow:1px 1px 1px rgba(0,0,0,0.18)"><svg style="left:-3px;top:-3px;filter:blur(0.45px)" width="69" height="53" viewBox="-3 -3 69 53">
<linearGradient id="g4" x1="0" y1="1" x2="0.9" y2="0.1"><stop offset="0" stop-color="#2468e8"/><stop offset="0.4" stop-color="#0e34a8"/><stop offset="0.75" stop-color="#041868"/><stop offset="1" stop-color="#000838"/></linearGradient>
<rect x="-3" y="-3" width="69" height="53" fill="url(#g4)"/>
<path d="M19 13.0 Q22.5 10.9 26.0 15.7 Q29.5 13.1 33.0 19.2 Q36.5 18.4 40.0 22.4 Q43.5 22.4 47.0 24.4 Q50.5 24.0 54.0 26.5 Q57.5 24.0 61.0 28.5" stroke="#f8dcc0" stroke-width="0.7" fill="none" opacity="0.9"/><path d="M19 14.4 Q22.5 17.1 26.0 17.4 Q29.5 17.9 33.0 20.6 Q36.5 21.1 40.0 22.5 Q43.5 20.8 47.0 24.3 Q50.5 22.1 54.0 27.3 Q57.5 27.5 61.0 30.0" stroke="#d8a070" stroke-width="1.0" fill="none" opacity="0.9"/><path d="M19 15.8 Q22.5 13.4 26.0 18.9 Q29.5 17.0 33.0 21.7 Q36.5 23.0 40.0 23.4 Q43.5 24.1 47.0 26.2 Q50.5 26.3 54.0 28.8 Q57.5 28.6 61.0 32.1" stroke="#f8dcc0" stroke-width="0.9" fill="none" opacity="0.9"/><path d="M19 17.2 Q22.5 15.3 26.0 19.0 Q29.5 16.5 33.0 22.1 Q36.5 22.0 40.0 24.0 Q43.5 23.7 47.0 26.0 Q50.5 23.5 54.0 28.7 Q57.5 26.7 61.0 31.1" stroke="#d8a070" stroke-width="0.8" fill="none" opacity="0.9"/><path d="M19 18.6 Q22.5 15.8 26.0 20.7 Q29.5 22.3 33.0 23.3 Q36.5 25.6 40.0 25.6 Q43.5 26.8 47.0 27.3 Q50.5 27.8 54.0 29.7 Q57.5 31.8 61.0 31.8" stroke="#d8a070" stroke-width="1.0" fill="none" opacity="0.9"/><path d="M19 20.0 Q22.5 17.4 26.0 22.3 Q29.5 23.2 33.0 24.7 Q36.5 26.6 40.0 27.8 Q43.5 27.1 47.0 29.2 Q50.5 26.4 54.0 31.5 Q57.5 29.6 61.0 33.4" stroke="#f0c8a0" stroke-width="1.0" fill="none" opacity="0.9"/><path d="M19 21.4 Q22.5 20.1 26.0 22.4 Q29.5 21.8 33.0 24.7 Q36.5 24.6 40.0 27.3 Q43.5 26.7 47.0 28.2 Q50.5 26.0 54.0 29.4 Q57.5 29.7 61.0 30.9" stroke="#f8dcc0" stroke-width="1.3" fill="none" opacity="0.9"/>
<ellipse cx="15" cy="18.5" rx="6.5" ry="7" fill="#c87818"/>
<ellipse cx="17" cy="17" rx="3.5" ry="4" fill="#f0c880"/>
<ellipse cx="13" cy="21" rx="2.5" ry="2.5" fill="#a05810"/>
</svg></div><div class="a" style="left:477.6px;top:69.5px;width:63px;height:47px;overflow:hidden;box-shadow:1px 1px 1px rgba(0,0,0,0.18)"><svg style="left:-3px;top:-3px;filter:blur(0.6px)" width="69" height="53" viewBox="-3 -3 69 53"><rect x="-3" y="-3" width="69" height="53" fill="#9a8070"/>
<rect x="36" y="-3" width="30" height="10" fill="#98a078"/>
<path d="M30 -3L37 -3L34 9L28 8Z" fill="#dccca8"/>
<rect x="55" y="22" width="11" height="28" fill="#b89888"/>
<rect x="-3" y="16" width="9" height="34" fill="#5a3424"/>
<ellipse cx="17" cy="14" rx="14" ry="12.5" fill="#d0d0d0"/>
<ellipse cx="16" cy="14" rx="7" ry="8" fill="#6a6a6a"/>
<ellipse cx="52" cy="18" rx="11.5" ry="13.5" fill="#c4c4c4"/>
<ellipse cx="52.5" cy="18" rx="5.5" ry="8" fill="#5e5e5e"/>
<ellipse cx="35" cy="26" rx="16" ry="17" fill="#b8b8b8"/>
<ellipse cx="35" cy="16" rx="10" ry="6" fill="#d4d4d4"/>
<ellipse cx="42" cy="30" rx="6" ry="7" fill="#c8c8c8"/>
<path d="M4 20L13 18L27 35L29 50L13 50L6 32Z" fill="#d8ccc0"/>
<path d="M34 50L40 38L52 33L60 50Z" fill="#3e3e3e"/>
<ellipse cx="29" cy="32" rx="4.8" ry="5" fill="#111"/>
<circle cx="24" cy="24" r="1.3" fill="#222"/><circle cx="41" cy="27" r="1.3" fill="#222"/>
</svg></div><div class="a" style="left:552.8px;top:69.5px;width:63px;height:47px;overflow:hidden;box-shadow:1px 1px 1px rgba(0,0,0,0.18)"><svg style="left:-3px;top:-3px;filter:blur(0.6px)" width="69" height="53" viewBox="-3 -3 69 53">
<linearGradient id="g6" x1="0" y1="0" x2="0" y2="1"><stop offset="0" stop-color="#4c7cc4"/><stop offset="0.2" stop-color="#90a8d0"/><stop offset="0.36" stop-color="#d0ccd0"/><stop offset="0.5" stop-color="#f0c8a0"/><stop offset="0.58" stop-color="#c0a8a0"/><stop offset="0.62" stop-color="#2a2018"/><stop offset="1" stop-color="#1e1610"/></linearGradient>
<rect x="-3" y="-3" width="69" height="53" fill="url(#g6)"/>
<rect x="36" y="23.5" width="30" height="4" fill="#7080a0"/>
<path d="M12 12L15 10L18 14L21 16L25 21L30 25L66 27.5L66 50L-3 50L-3 28Z" fill="#262018"/>
<rect x="1" y="10" width="12" height="18" fill="#e8c090"/>
<rect x="1" y="17" width="12" height="11" fill="#d8a070"/>
<rect x="4" y="5" width="6" height="5.5" fill="#c86a4a"/>
<rect x="5.5" y="2.5" width="3" height="3" fill="#e8d8c0"/>
<rect x="13" y="12" width="4" height="11" fill="#b0b8c8"/>
<ellipse cx="8" cy="31" rx="9" ry="4" fill="#7a4226"/>
<ellipse cx="26" cy="29.5" rx="4" ry="3.5" fill="#6a4a28"/>
<ellipse cx="26" cy="44" rx="8" ry="2.5" fill="#5a3018"/>
<ellipse cx="50" cy="38" rx="10" ry="5" fill="#322a20"/>
</svg></div><div class="a" style="left:628px;top:69.5px;width:63px;height:47px;overflow:hidden;box-shadow:1px 1px 1px rgba(0,0,0,0.18)"><svg style="left:-3px;top:-3px;filter:blur(0.7px)" width="69" height="53" viewBox="-3 -3 69 53">
<linearGradient id="g7" x1="0" y1="0" x2="0" y2="1"><stop offset="0" stop-color="#5a90d8"/><stop offset="0.35" stop-color="#98b8e4"/><stop offset="0.5" stop-color="#e0e8f4"/><stop offset="0.72" stop-color="#e8eef6"/><stop offset="0.75" stop-color="#aaaab2"/><stop offset="1" stop-color="#86868e"/></linearGradient>
<rect x="-3" y="-3" width="69" height="53" fill="url(#g7)"/>
<path d="M12 9L19 8L22 18L21 34L18 44L13 44L10 34Z" fill="#eaeaf0"/>
<path d="M12 10L9 24L7 34L10 36L12 26Z" fill="#2a3244"/>
<circle cx="17" cy="8" r="3" fill="#1a1a22"/>
<path d="M18 7L23 5L20 9Z" fill="#2a2a30"/>
<path d="M14 11L19 11L18 15L14 15Z" fill="#e8b030"/>
<path d="M17 28L27 20L30 21L19 30Z" fill="#243048"/>
<path d="M29 9L33.5 8.5L36 16L37 30L35.5 44L29.5 44L28 30L27 16Z" fill="#1c2438"/><path d="M35.5 14L37 24L36.5 36L35 30Z" fill="#7a88a8"/>
<path d="M27 7L31 8L30 10Z" fill="#222"/>
<path d="M36 20L48 30L48 34L38 28Z" fill="#243048"/>
<path d="M41 8L46 9L46 30L41 26L39 14Z" fill="#ecebe0"/>
<path d="M44 5L48 6L52 18L55 42L48 42L44 28Z" fill="#202a40"/>
<circle cx="46" cy="6" r="2.6" fill="#1a1a22"/>
<path d="M42 10L45 10L44 13L42 13Z" fill="#e8b030"/>
</svg></div><div class="a" style="left:248px;top:67px;width:73px;height:63.6px;border:1px solid #99d1ff"></div><svg style="left:175px;top:106.3px" width="18" height="14" viewBox="0 0 18 14"><path d="M1.5 7.2L5.6 11L15 2" stroke="#fff" stroke-opacity="0.7" stroke-width="4" fill="none"/><path d="M1.5 7.2L5.6 11L15 2" stroke="#3a9e22" stroke-width="2.5" fill="none"/></svg><svg style="left:250.3px;top:106.3px" width="18" height="14" viewBox="0 0 18 14"><path d="M1.5 7.2L5.6 11L15 2" stroke="#fff" stroke-opacity="0.7" stroke-width="4" fill="none"/><path d="M1.5 7.2L5.6 11L15 2" stroke="#3a9e22" stroke-width="2.5" fill="none"/></svg><svg style="left:325.3px;top:106.3px" width="18" height="14" viewBox="0 0 18 14"><path d="M1.5 7.2L5.6 11L15 2" stroke="#fff" stroke-opacity="0.7" stroke-width="4" fill="none"/><path d="M1.5 7.2L5.6 11L15 2" stroke="#3a9e22" stroke-width="2.5" fill="none"/></svg><svg style="left:400.7px;top:106.3px" width="18" height="14" viewBox="0 0 18 14"><path d="M1.5 7.2L5.6 11L15 2" stroke="#fff" stroke-opacity="0.7" stroke-width="4" fill="none"/><path d="M1.5 7.2L5.6 11L15 2" stroke="#3a9e22" stroke-width="2.5" fill="none"/></svg><svg style="left:475.6px;top:106.3px" width="18" height="14" viewBox="0 0 18 14"><path d="M1.5 7.2L5.6 11L15 2" stroke="#fff" stroke-opacity="0.7" stroke-width="4" fill="none"/><path d="M1.5 7.2L5.6 11L15 2" stroke="#3a9e22" stroke-width="2.5" fill="none"/></svg><svg style="left:550.8px;top:106.3px" width="18" height="14" viewBox="0 0 18 14"><path d="M1.5 7.2L5.6 11L15 2" stroke="#fff" stroke-opacity="0.7" stroke-width="4" fill="none"/><path d="M1.5 7.2L5.6 11L15 2" stroke="#3a9e22" stroke-width="2.5" fill="none"/></svg><svg style="left:626px;top:106.3px" width="18" height="14" viewBox="0 0 18 14"><path d="M1.5 7.2L5.6 11L15 2" stroke="#fff" stroke-opacity="0.7" stroke-width="4" fill="none"/><path d="M1.5 7.2L5.6 11L15 2" stroke="#3a9e22" stroke-width="2.5" fill="none"/></svg><div class="t" style="left:177px;top:118.55px;color:#1a1a1a;">Chrysanthemum.</div>
<div class="t" style="left:177px;top:130.05px;color:#1a1a1a;">jpg</div>
<div class="t" style="left:265.3px;top:118.55px;color:#1a1a1a;">Desert.jpg</div>
<div class="t" style="left:330px;top:118.55px;color:#1a1a1a;">Hydrangeas.jpg</div>
<div class="t" style="left:413.4px;top:118.55px;color:#1a1a1a;">Jellyfish.jpg</div>
<div class="t" style="left:493.4px;top:118.55px;color:#1a1a1a;">Koala.jpg</div>
<div class="t" style="left:557.8px;top:118.55px;color:#1a1a1a;">Lighthouse.jpg</div>
<div class="t" style="left:636.7px;top:118.55px;color:#1a1a1a;">Penguins.jpg</div>
<div class="a" style="left:177px;top:161.6px;width:63px;height:47px;overflow:hidden;box-shadow:1px 1px 1px rgba(0,0,0,0.18)"><svg style="left:-3px;top:-3px;filter:blur(0.5px)" width="69" height="53" viewBox="-3 -3 69 53">
<linearGradient id="g8" x1="0" y1="0" x2="0" y2="1"><stop offset="0" stop-color="#68acec"/><stop offset="0.5" stop-color="#9acbf4"/></linearGradient>
<rect x="-3" y="-3" width="69" height="53" fill="url(#g8)"/>
<path d="M-3 24L12 16L20 6L36 4L50 8L66 9L66 50L-3 50Z" fill="#c89808"/><path d="M-3 36L15 37L30 39L45 36L66 35L66 50L-3 50Z" fill="#3e6412"/>
<path d="M-3 43L66 42L66 50L-3 50Z" fill="#24420a"/>
<path d="M28 24 L29 50" stroke="#3a5a10" stroke-width="1"/><path d="M42 21 L43 50" stroke="#3a5a10" stroke-width="1"/><path d="M58 26 L59 50" stroke="#3a5a10" stroke-width="1"/><path d="M17 32 L18 50" stroke="#3a5a10" stroke-width="1"/><path d="M7 40 L8 50" stroke="#3a5a10" stroke-width="1"/><path d="M31 41 L32 50" stroke="#3a5a10" stroke-width="1"/><path d="M50 39 L51 50" stroke="#3a5a10" stroke-width="1"/><path d="M62 38 L63 50" stroke="#3a5a10" stroke-width="1"/>
<path d="M19 8.6 Q19 24 28 24 Q37 24 37 8.6 L32.5 2 L28 6.4 L23.5 2 Z" fill="#e8b410" stroke="#a87800" stroke-width="0.8"/><ellipse cx="25.75" cy="11.9" rx="4.05" ry="6.6" fill="#f8d430" opacity="0.9"/><path d="M34 7.0 Q34 21 42 21 Q50 21 50 7.0 L46.0 1 L42 5.0 L38.0 1 Z" fill="#e8b410" stroke="#a87800" stroke-width="0.8"/><ellipse cx="40.0" cy="10.0" rx="3.6" ry="6.0" fill="#f8d430" opacity="0.9"/><path d="M50 12.0 Q50 26 58 26 Q66 26 66 12.0 L62.0 6 L58 10.0 L54.0 6 Z" fill="#e8b410" stroke="#a87800" stroke-width="0.8"/><ellipse cx="56.0" cy="15.0" rx="3.6" ry="6.0" fill="#f8d430" opacity="0.9"/><path d="M8 19.4 Q8 32 17 32 Q26 32 26 19.4 L21.5 14 L17 17.6 L12.5 14 Z" fill="#e8b410" stroke="#a87800" stroke-width="0.8"/><ellipse cx="14.75" cy="22.1" rx="4.05" ry="5.3999999999999995" fill="#f8d430" opacity="0.9"/><path d="M-2 27.4 Q-2 40 7 40 Q16 40 16 27.4 L11.5 22 L7 25.6 L2.5 22 Z" fill="#e8b410" stroke="#a87800" stroke-width="0.8"/><ellipse cx="4.75" cy="30.1" rx="4.05" ry="5.3999999999999995" fill="#f8d430" opacity="0.9"/><path d="M21 27.0 Q21 41 31 41 Q41 41 41 27.0 L36.0 21 L31 25.0 L26.0 21 Z" fill="#e8b410" stroke="#a87800" stroke-width="0.8"/><ellipse cx="28.5" cy="30.0" rx="4.5" ry="6.0" fill="#f8d430" opacity="0.9"/><path d="M42 27.8 Q42 39 50 39 Q58 39 58 27.8 L54.0 23 L50 26.2 L46.0 23 Z" fill="#e8b410" stroke="#a87800" stroke-width="0.8"/><ellipse cx="48.0" cy="30.2" rx="3.6" ry="4.8" fill="#f8d430" opacity="0.9"/><path d="M57 26.8 Q57 38 62 38 Q67 38 67 26.8 L64.5 22 L62 25.2 L59.5 22 Z" fill="#e8b410" stroke="#a87800" stroke-width="0.8"/><ellipse cx="60.75" cy="29.2" rx="2.25" ry="4.8" fill="#f8d430" opacity="0.9"/><path d="M12 37.6 Q12 46 20 46 Q28 46 28 37.6 L24.0 34 L20 36.4 L16.0 34 Z" fill="#e8b410" stroke="#a87800" stroke-width="0.8"/><ellipse cx="18.0" cy="39.4" rx="3.6" ry="3.5999999999999996" fill="#f8d430" opacity="0.9"/><path d="M35 37.6 Q35 46 42 46 Q49 46 49 37.6 L45.5 34 L42 36.4 L38.5 34 Z" fill="#e8b410" stroke="#a87800" stroke-width="0.8"/><ellipse cx="40.25" cy="39.4" rx="3.15" ry="3.5999999999999996" fill="#f8d430" opacity="0.9"/>
</svg></div><svg style="left:261px;top:148.2px" width="48" height="60" viewBox="0 0 48 60"><linearGradient id="pg" x1="0" y1="0" x2="1" y2="1"><stop offset="0" stop-color="#fafafa"/><stop offset="1" stop-color="#ececec"/></linearGradient><path d="M0.5 0.5H35L46.5 11.5V58H0.5Z" fill="url(#pg)" stroke="#d4d4d4"/><path d="M46.5 11.5V58.5H0.5" fill="none" stroke="#c0c0c0" stroke-width="1"/><path d="M35 0.5V11.5H46.5Z" fill="#fcfcfc" stroke="#c8c8c8" stroke-width="0.8"/><rect x="9" y="21.8" width="27.4" height="27.2" rx="1" fill="#4486f2"/><rect x="13.4" y="27" width="18.7" height="1.7" fill="#fff"/><rect x="13.4" y="31.4" width="18.7" height="1.7" fill="#fff"/><rect x="13.4" y="35.6" width="18.7" height="1.7" fill="#fff"/><rect x="13.4" y="39.8" width="10.4" height="1.7" fill="#fff"/></svg><svg style="left:411.2px;top:148.2px" width="48" height="60" viewBox="0 0 48 60"><linearGradient id="pg" x1="0" y1="0" x2="1" y2="1"><stop offset="0" stop-color="#fafafa"/><stop offset="1" stop-color="#ececec"/></linearGradient><path d="M0.5 0.5H35L46.5 11.5V58H0.5Z" fill="url(#pg)" stroke="#d4d4d4"/><path d="M46.5 11.5V58.5H0.5" fill="none" stroke="#c0c0c0" stroke-width="1"/><path d="M35 0.5V11.5H46.5Z" fill="#fcfcfc" stroke="#c8c8c8" stroke-width="0.8"/><rect x="9" y="21.8" width="27.4" height="27.2" rx="1" fill="#4486f2"/><rect x="13.4" y="27" width="18.7" height="1.7" fill="#fff"/><rect x="13.4" y="31.4" width="18.7" height="1.7" fill="#fff"/><rect x="13.4" y="35.6" width="18.7" height="1.7" fill="#fff"/><rect x="13.4" y="39.8" width="10.4" height="1.7" fill="#fff"/></svg><div class="a" style="left:326.8px;top:169.1px;width:64.4px;height:38.5px;background:#8c8c8c;box-shadow:1px 1px 1px rgba(0,0,0,0.2)"></div><div class="a" style="left:333.1px;top:169.1px;width:51.8px;height:38.5px;background:#2e2e2e"></div><svg style="left:326.8px;top:169.1px" width="65" height="40"><rect x="1.1" y="1.8" width="4.6" height="3.8" fill="#f4f4f4"/><rect x="58.7" y="1.8" width="4.6" height="3.8" fill="#f4f4f4"/><rect x="1.1" y="8.1" width="4.6" height="3.8" fill="#f4f4f4"/><rect x="58.7" y="8.1" width="4.6" height="3.8" fill="#f4f4f4"/><rect x="1.1" y="14.4" width="4.6" height="3.8" fill="#f4f4f4"/><rect x="58.7" y="14.4" width="4.6" height="3.8" fill="#f4f4f4"/><rect x="1.1" y="20.7" width="4.6" height="3.8" fill="#f4f4f4"/><rect x="58.7" y="20.7" width="4.6" height="3.8" fill="#f4f4f4"/><rect x="1.1" y="27.0" width="4.6" height="3.8" fill="#f4f4f4"/><rect x="58.7" y="27.0" width="4.6" height="3.8" fill="#f4f4f4"/><rect x="1.1" y="33.3" width="4.6" height="3.8" fill="#f4f4f4"/><rect x="58.7" y="33.3" width="4.6" height="3.8" fill="#f4f4f4"/></svg><div class="a" style="left:334.2px;top:170.9px;width:49.6px;height:35.4px;overflow:hidden;box-shadow:1px 1px 1px rgba(0,0,0,0.18)"><svg style="left:-3px;top:-3px;filter:blur(0.6px)" width="55.6" height="41.4" viewBox="-3 -3 55.6 41.4">
<linearGradient id="g9" x1="0" y1="0" x2="0" y2="1"><stop offset="0" stop-color="#8088b8"/><stop offset="0.62" stop-color="#98a4cc"/><stop offset="0.66" stop-color="#6a8a48"/><stop offset="1" stop-color="#5a7a38"/></linearGradient>
<rect x="-3" y="-3" width="56" height="42" fill="url(#g9)"/>
<path d="M-3 27L20 24L40 23L53 21L53 39L-3 39Z" fill="#6a8c42"/>
<ellipse cx="16" cy="22" rx="2" ry="3" fill="#5a3a28"/><ellipse cx="22" cy="22" rx="1.6" ry="2.6" fill="#6a4030"/>
<ellipse cx="29" cy="23" rx="1.3" ry="2" fill="#503828"/><ellipse cx="39" cy="18" rx="2" ry="3.4" fill="#5a3a28"/>
<ellipse cx="18" cy="31" rx="3" ry="1" fill="#c8a080"/>
</svg></div><svg style="left:325.3px;top:198.6px" width="18" height="14" viewBox="0 0 18 14"><path d="M1.5 7.2L5.6 11L15 2" stroke="#fff" stroke-opacity="0.7" stroke-width="4" fill="none"/><path d="M1.5 7.2L5.6 11L15 2" stroke="#3a9e22" stroke-width="2.5" fill="none"/></svg><svg style="left:400.7px;top:198.4px" width="18" height="14" viewBox="0 0 18 14"><path d="M1.5 7.2L5.6 11L15 2" stroke="#fff" stroke-opacity="0.7" stroke-width="4" fill="none"/><path d="M1.5 7.2L5.6 11L15 2" stroke="#3a9e22" stroke-width="2.5" fill="none"/></svg><div class="t" style="left:255.2px;top:210.55px;color:#1a1a1a;">Untitled</div>
<div class="t" style="left:255.2px;top:221.15px;color:#1a1a1a;">document.gdoc</div>
<div class="t" style="left:191.5px;top:210.55px;color:#1a1a1a;">Tulips.jpg</div>
<div class="t" style="left:335.8px;top:210.55px;color:#1a1a1a;">Wildlife.wmv</div>
<div class="t" style="left:408.3px;top:210.55px;color:#1a1a1a;">windows 10</div>
<div class="t" style="left:408.3px;top:220.85px;color:#1a1a1a;">update taking</div>
<div class="t" style="left:408.3px;top:231.25px;color:#1a1a1a;">forever.gdoc</div>

<div class="t" style="left:15.2px;top:486.85px;color:#333;">11 items</div>

<svg style="left:11.7px;top:5.7px" width="9.7" height="8.9" viewBox="0 0 10 8.7" preserveAspectRatio="none"><path d="M3.3 0H6.7L10 5.8H6.6Z" fill="#f8c81c"/><path d="M3.3 0L5 2.9L1.7 8.7L0 5.8Z" fill="#139a48"/><path d="M1.7 8.7L3.4 5.8H10L8.3 8.7Z" fill="#3a7ef0"/></svg><div class="a" style="left:27px;top:6px;width:1px;height:8.6px;background:#a8a8a8"></div><svg style="left:35px;top:5px" width="9.5" height="12" viewBox="0 0 9.5 12"><path d="M0.6 0.6H6.6L8.9 2.9V11.4H0.6Z" fill="#fbfbfb" stroke="#9c9c9c" stroke-width="1"/><path d="M6.6 0.6V2.9H8.9" fill="none" stroke="#9c9c9c" stroke-width="0.8"/><path d="M2.4 7.3L4 9L7.4 5" stroke="#f26a2e" stroke-width="1.3" fill="none"/></svg><svg style="left:50.8px;top:5.3px" width="9.5" height="11.8" viewBox="0 0 9.5 11.8"><path d="M0.5 0.5H8V6.8H9V11.3H0.5Z" fill="#fde48c" stroke="#eec44e" stroke-width="1"/><rect x="1.6" y="1.6" width="1" height="3" fill="#fff6cc"/></svg><div class="a" style="left:65.4px;top:9.6px;width:4.8px;height:0.9px;background:#666"></div><svg style="left:65.5px;top:11.4px" width="5" height="3"><path d="M0 0H4.6L2.3 2.3Z" fill="#222"/></svg><div class="a" style="left:76px;top:6px;width:1px;height:8.6px;background:#b0b0b0"></div><svg style="left:673.4px;top:27.4px" width="6" height="3.5"><path d="M0.3 0.3L3 3L5.7 0.3" stroke="#a8a8a8" stroke-width="0.9" fill="none"/></svg><div class="a" style="left:686.9px;top:24.4px;width:9.6px;height:9.6px;border-radius:50%;background:radial-gradient(circle at 40% 35%,#3d8ee6,#1560c0)"></div><div class="a" style="left:689.4px;top:23.2px;font:bold 8.5px 'Liberation Sans',sans-serif;color:#fff;line-height:12px">?</div><svg style="left:14.6px;top:46px" width="8.5" height="7.6" viewBox="0 0 8.5 7.6"><path d="M8.3 3.8H0.8M3.9 0.5L0.6 3.8L3.9 7.1" stroke="#d2d2d2" stroke-width="1.1" fill="none"/></svg><svg style="left:35.4px;top:46px" width="8.5" height="7.6" viewBox="0 0 8.5 7.6"><path d="M0.2 3.8H7.7M4.6 0.5L7.9 3.8L4.6 7.1" stroke="#d2d2d2" stroke-width="1.1" fill="none"/></svg><svg style="left:53.7px;top:47.9px" width="5" height="3"><path d="M0.3 0.3L2.5 2.6L4.7 0.3" stroke="#c8c8c8" stroke-width="0.9" fill="none"/></svg><svg style="left:66.2px;top:46px" width="8" height="8" viewBox="0 0 8 8"><path d="M4 8V0.8M0.5 4.2L4 0.7L7.5 4.2" stroke="#5a5a5a" stroke-width="1.2" fill="none"/></svg><svg style="left:82.3px;top:45px" width="9.4" height="8.3" viewBox="0 0 10 8.7" preserveAspectRatio="none"><path d="M3.3 0H6.7L10 5.8H6.6Z" fill="#f8c81c"/><path d="M3.3 0L5 2.9L1.7 8.7L0 5.8Z" fill="#139a48"/><path d="M1.7 8.7L3.4 5.8H10L8.3 8.7Z" fill="#3a7ef0"/></svg><svg style="left:97.5px;top:48px" width="3.5" height="5"><path d="M0.5 0.5L2.8 2.5L0.5 4.5" stroke="#666" stroke-width="0.9" fill="none"/></svg><svg style="left:141.6px;top:48px" width="3.5" height="5"><path d="M0.5 0.5L2.8 2.5L0.5 4.5" stroke="#666" stroke-width="0.9" fill="none"/></svg><svg style="left:518px;top:49px" width="6.2" height="3.8"><path d="M0.4 0.4L3.1 3.2L5.8 0.4" stroke="#555" stroke-width="1.1" fill="none"/></svg><svg style="left:530px;top:45.5px" width="10" height="10" viewBox="0 0 10 10"><path d="M7.5 3.8A3.1 3.1 0 1 1 2.6 3.2" stroke="#666" stroke-width="1.15" fill="none"/><path d="M1.4 1.2L5.4 1.9L2.6 4.4Z" fill="#666"/></svg><svg style="left:676.5px;top:47px" width="9" height="8" viewBox="0 0 9 8"><circle cx="5.5" cy="2.8" r="2.2" stroke="#555" stroke-width="1" fill="none"/><path d="M3.9 4.4L0.8 7.3" stroke="#555" stroke-width="1.2"/></svg><div class="a" style="left:52.5px;top:487px;width:1px;height:11px;background:#f0f0f0"></div><svg style="left:668px;top:487.3px" width="11" height="9.5"><rect x="0" y="0.8" width="2.6" height="2.2" fill="#f4f4f4" stroke="#bbb" stroke-width="0.5"/><rect x="3.4" y="1.4" width="2.8" height="1" fill="#444"/><rect x="7.4" y="1.4" width="3" height="1" fill="#444"/><rect x="0" y="3.6" width="2.6" height="2.2" fill="#f4f4f4" stroke="#bbb" stroke-width="0.5"/><rect x="3.4" y="4.2" width="2.8" height="1" fill="#444"/><rect x="7.4" y="4.2" width="3" height="1" fill="#444"/><rect x="0" y="6.4" width="2.6" height="2.2" fill="#f4f4f4" stroke="#bbb" stroke-width="0.5"/><rect x="3.4" y="7.0" width="2.8" height="1" fill="#bbb"/><rect x="7.4" y="7.0" width="3" height="1" fill="#bbb"/></svg><div class="a" style="left:681px;top:485px;width:16px;height:16px;border:1px solid #3c9ce0;background:#cce8ff"></div><div class="a" style="left:684.8px;top:489px;width:9.2px;height:7.6px;background:#fff;border:1px solid #b4b4b4;border-radius:1px"></div><div class="a" style="left:685.8px;top:490.2px;width:7.2px;height:5.2px;background:linear-gradient(180deg,#5aa0e8 0,#7ab8f0 30%,#3a6a48 50%,#1a3020 75%,#8aa0b8)"></div>
<svg style="left:0;top:0" width="700" height="503"><ellipse cx="618.3" cy="50.2" rx="72.6" ry="17.4" fill="none" stroke="#d9573a" stroke-width="1.5"/></svg>
</body></html>
